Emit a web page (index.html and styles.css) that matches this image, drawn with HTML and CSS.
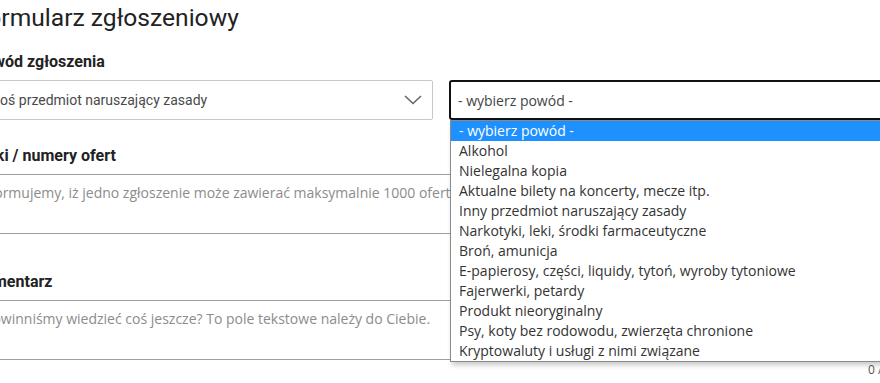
FILE: index.html
```html
<!DOCTYPE html>
<html lang="pl">
<head>
<meta charset="utf-8">
<title>Formularz zgłoszeniowy</title>
<link rel="stylesheet" href="styles.css">
</head>
<body>
<div class="page">
  <h1 class="title">Formularz zgłoszeniowy</h1>

  <div class="field field-reason">
    <div class="label">Powód zgłoszenia</div>
    <div class="selects">
      <div class="select select-category">
        <span class="select-value">Coś przedmiot naruszający zasady</span>
        <svg class="chevron" width="18" height="10" viewBox="0 0 18 10"><path d="M1 1 L9 8.5 L17 1" fill="none" stroke="#666" stroke-width="1.6"/></svg>
      </div>
      <div class="select select-reason is-open">
        <span class="select-value">- wybierz powód -</span>
        <ul class="listbox">
          <li class="option is-selected">- wybierz powód -</li>
          <li class="option">Alkohol</li>
          <li class="option">Nielegalna kopia</li>
          <li class="option">Aktualne bilety na koncerty, mecze itp.</li>
          <li class="option">Inny przedmiot naruszający zasady</li>
          <li class="option">Narkotyki, leki, środki farmaceutyczne</li>
          <li class="option">Broń, amunicja</li>
          <li class="option">E-papierosy, części, liquidy, tytoń, wyroby tytoniowe</li>
          <li class="option">Fajerwerki, petardy</li>
          <li class="option">Produkt nieoryginalny</li>
          <li class="option">Psy, koty bez rodowodu, zwierzęta chronione</li>
          <li class="option">Kryptowaluty i usługi z nimi związane</li>
        </ul>
      </div>
    </div>
  </div>

  <div class="field field-links">
    <div class="label">Linki / numery ofert</div>
    <div class="textarea textarea-links"><span class="placeholder">Informujemy, iż jedno zgłoszenie może zawierać maksymalnie 1000 ofert.</span></div>
    <div class="counter">0 / 1000</div>
  </div>

  <div class="field field-comment">
    <div class="label">Komentarz</div>
    <div class="textarea"><span class="placeholder">Powinniśmy wiedzieć coś jeszcze? To pole tekstowe należy do Ciebie.</span></div>
    <div class="counter">0 / 1000</div>
  </div>
</div>
</body>
</html>
```

FILE: styles.css
```css
html, body {
  margin: 0;
  padding: 0;
  background: #fff;
  overflow: hidden;
}

body {
  width: 880px;
  height: 383px;
}

.page {
  width: 936px;
  margin-left: -26px;
  font-family: Roboto, "Liberation Sans", sans-serif;
  color: #222;
}

.title {
  margin: 0;
  font-size: 24.6px;
  line-height: 36px;
  font-weight: 400;
  color: #222;
}

.label {
  font-size: 16px;
  line-height: 20px;
  font-weight: 700;
  color: #222;
}

.field-reason {
  margin-top: 16px;
}

.field-reason .label {
  margin-bottom: 8px;
}

.selects {
  display: grid;
  grid-template-columns: 459px 460px;
  column-gap: 16px;
}

.select {
  position: relative;
  box-sizing: border-box;
  height: 40px;
  display: flex;
  align-items: center;
  justify-content: space-between;
}

.select-category {
  border: 1px solid #c8c8c8;
  border-radius: 2px;
  padding: 0 10px 0 16px;
  font-family: Roboto, "Liberation Sans", sans-serif;
  font-size: 14px;
  color: #4a4a4a;
}

.chevron {
  display: block;
}

.select-reason {
  border: 2px solid #111;
  border-radius: 3px;
  padding: 0 8px 0 7px;
  font-family: "Open Sans", "Liberation Sans", sans-serif;
  font-size: 14px;
  color: #444;
}

.listbox {
  position: absolute;
  top: 38px;
  left: -1px;
  width: 462px;
  box-sizing: border-box;
  margin: 0;
  padding: 0;
  list-style: none;
  background: #fff;
  border: 1px solid #8a8a8a;
  box-shadow: 2px 3px 5px rgba(0, 0, 0, 0.22);
  z-index: 2;
}

.option {
  height: 20px;
  line-height: 20px;
  padding-left: 8px;
  font-family: "Open Sans", "Liberation Sans", sans-serif;
  font-size: 14px;
  color: #333;
  white-space: nowrap;
}

.option.is-selected {
  background: #1e90ff;
  color: #fff;
}

.field-links {
  margin-top: 26px;
}

.field-comment {
  margin-top: 20px;
}

.field-links .label,
.field-comment .label {
  margin-bottom: 8px;
}

.textarea {
  box-sizing: border-box;
  height: 60px;
  border: 1px solid #a0a0a0;
  padding: 8px 9px;
  font-family: "Open Sans", "Liberation Sans", sans-serif;
  font-size: 14px;
  line-height: 20px;
}

.textarea-links {
  padding-left: 2px;
}

.placeholder {
  color: #8c8c8c;
  white-space: nowrap;
}

.counter {
  text-align: right;
  font-family: "Open Sans", "Liberation Sans", sans-serif;
  font-size: 12px;
  line-height: 16px;
  color: #555;
  padding-top: 2px;
  margin-right: -3px;
}
```
